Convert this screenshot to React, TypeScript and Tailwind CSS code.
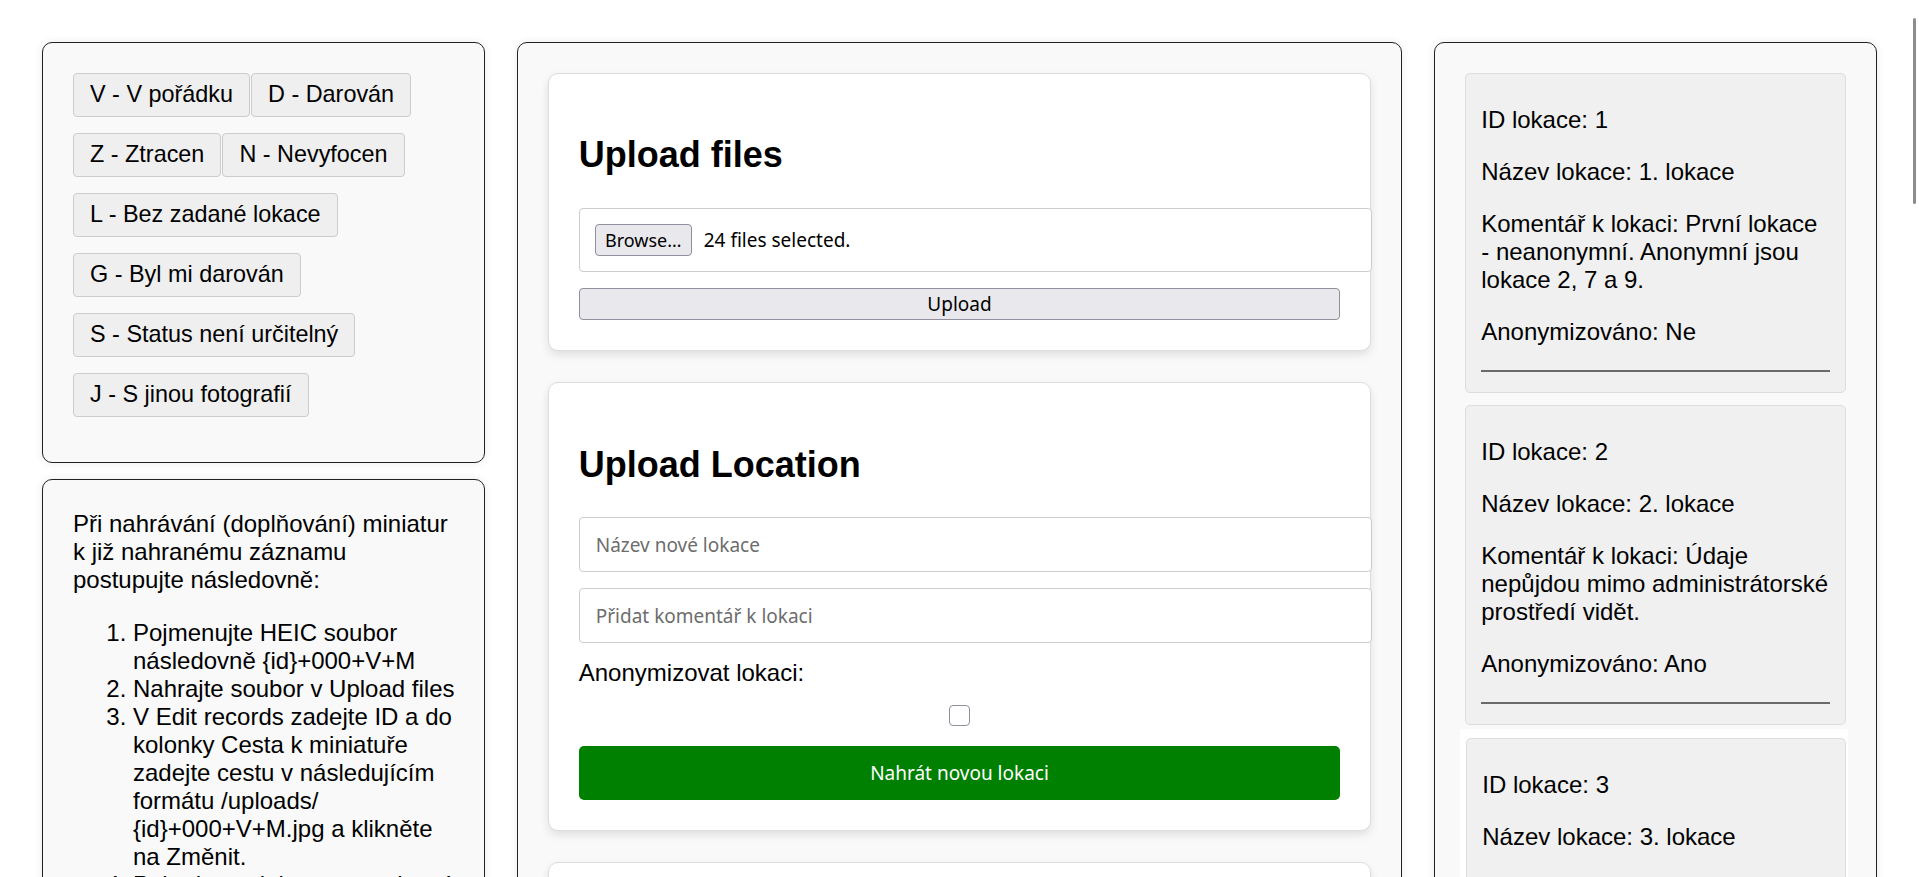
import React from 'react';

const statuses = [
  'V - V pořádku',
  'D - Darován',
  'Z - Ztracen',
  'N - Nevyfocen',
  'L - Bez zadané lokace',
  'G - Byl mi darován',
  'S - Status není určitelný',
  'J - S jinou fotografií',
];

const locations = [
  {
    id: 1,
    name: '1. lokace',
    comment: 'První lokace - neanonymní. Anonymní jsou lokace 2, 7 a 9.',
    anon: 'Ne',
  },
  {
    id: 2,
    name: '2. lokace',
    comment: 'Údaje nepůjdou mimo administrátorské prostředí vidět.',
    anon: 'Ano',
  },
];

const panel =
  'border border-[#222] rounded-[10px] bg-[#f9f9f9] shadow-[0_0_10px_rgba(0,0,0,0.08)]';
const card =
  'bg-white border border-[#ddd] rounded-[10px] shadow-[0_4px_8px_rgba(0,0,0,0.1)] p-[30px]';
const control = "font-['Noto_Sans',sans-serif] text-[19px]";

function LocationCard({ loc }: { loc: typeof locations[number] }) {
  return (
    <div className="bg-[#f0f0f0] border border-[#ddd] rounded-[5px] px-[15px] py-[8px]">
      <p className="my-[24px]">ID lokace: {loc.id}</p>
      <p className="my-[24px]">Název lokace: {loc.name}</p>
      <p className="my-[24px]">Komentář k lokaci: {loc.comment}</p>
      <p className="my-[24px]">Anonymizováno: {loc.anon}</p>
      <div className="mt-[24px] mb-[12px] h-[2px] bg-[#6a6a6a]" />
    </div>
  );
}

export default function App() {
  return (
    <div className="relative h-[877px] overflow-hidden bg-white text-black font-['Liberation_Sans',Arial,sans-serif] text-[24px] leading-[28px]">
      <div className="grid grid-cols-[1fr_2fr_1fr] gap-x-8 items-start px-[42px] pt-[42px]">
        {/* left column */}
        <div className="flex flex-col gap-4">
          <div className={`${panel} pt-[30px] px-[30px] pb-[45px]`}>
            <div className="flex flex-wrap gap-x-[1px] gap-y-4">
              {statuses.map(s => (
                <button
                  key={s}
                  className="h-[44px] px-4 text-[23.4px] leading-none bg-[#efefef] border border-[#ccc] rounded-[4px] whitespace-nowrap"
                >
                  {s}
                </button>
              ))}
            </div>
          </div>

          <div className={`${panel} pt-[30px] pl-[30px] pr-[24px] pb-[30px]`}>
            <p>
              Při nahrávání (doplňování) miniatur k již nahranému záznamu postupujte následovně:
            </p>
            <ol className="list-decimal pl-[60px] mt-[25px]">
              <li>Pojmenujte HEIC soubor následovně {'{id}'}+000+V+M</li>
              <li>Nahrajte soubor v Upload files</li>
              <li className="pr-[6px]">
                V Edit records zadejte ID a do kolonky Cesta k miniatuře zadejte cestu v následujícím
                formátu /uploads/ {'{id}'}+000+V+M.jpg a klikněte na Změnit.
              </li>
              <li>Pokud se miniatura nezobrazí, obnovte stránku a postup zopakujte.</li>
            </ol>
          </div>
        </div>

        {/* middle column */}
        <div className={`${panel} p-[30px] h-[900px]`}>
          <div className="flex flex-col gap-[31px]">
            <div className={card}>
              <h2 className="mt-[31px] mb-[33px] text-[36px] leading-[40px] font-bold">Upload files</h2>
              <div className={`${control} w-[calc(100%+32px)] h-[64px] flex items-center pl-[15px] border border-[#ccc] rounded-[4px] bg-white`}>
                <span className="h-[32px] w-[97px] flex items-center justify-center bg-[#e9e9ed] border border-[#8f8f9d] rounded-[4px] text-[18px]">
                  Browse…
                </span>
                <span className="ml-[12px]">24 files selected.</span>
              </div>
              <button className={`${control} mt-4 w-full h-[32px] bg-[#e9e9ed] border border-[#8f8f9d] rounded-[4px] leading-none`}>
                Upload
              </button>
            </div>

            <div className={card}>
              <h2 className="mt-[32px] mb-[32px] text-[36px] leading-[40px] font-bold">Upload Location</h2>
              <input
                className={`${control} block w-[calc(100%+32px)] h-[55px] px-4 border border-[#ccc] rounded-[4px] bg-white placeholder:text-[#6d6d6d] outline-none`}
                placeholder="Název nové lokace"
              />
              <input
                className={`${control} block mt-4 w-[calc(100%+32px)] h-[55px] px-4 border border-[#ccc] rounded-[4px] bg-white placeholder:text-[#6d6d6d] outline-none`}
                placeholder="Přidat komentář k lokaci"
              />
              <label className="block mt-4">Anonymizovat lokaci:</label>
              <input
                type="checkbox"
                className="appearance-none block mx-auto mt-[18px] w-[21px] h-[21px] border border-[#8f8f9d] rounded-[4px] bg-white"
              />
              <button className={`${control} mt-[20px] w-full h-[54px] bg-[#008000] text-white rounded-[5px] leading-none`}>
                Nahrát novou lokaci
              </button>
            </div>

            <div className={card}>
              <h2 className="mt-[32px] mb-[32px] text-[36px] leading-[40px] font-bold">Edit records</h2>
            </div>
          </div>
        </div>

        {/* right column */}
        <div className={`${panel} p-[30px] h-[900px]`}>
          <LocationCard loc={locations[0]} />
          <div className="mt-[12px]">
            <LocationCard loc={locations[1]} />
          </div>
          <div className="mt-[4px] -ml-[5px] -mr-[2px] pt-[9px] pl-[6px] pr-[2px] bg-white">
            <div className="bg-[#f0f0f0] border border-[#ddd] rounded-[5px] px-[15px] py-[8px]">
              <p className="my-[24px]">ID lokace: 3</p>
              <p className="my-[24px]">Název lokace: 3. lokace</p>
              <p className="my-[24px]">Komentář k lokaci: Třetí lokace.</p>
            </div>
          </div>
        </div>
      </div>

      {/* overlay scrollbar */}
      <div className="absolute right-[3px] top-[18px] w-[3px] h-[186px] rounded-full bg-[#8c8c8c]" />
    </div>
  );
}
